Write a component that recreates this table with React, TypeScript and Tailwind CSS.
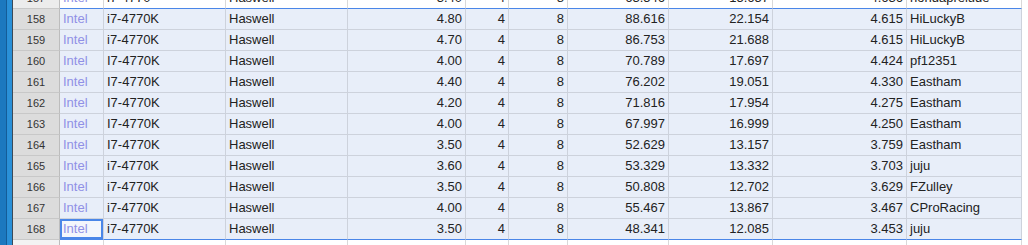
import React from "react";

const widths = [44, 122, 122, 118, 43, 59, 101, 104, 134, 115];
const align = ["l", "l", "l", "r", "r", "r", "r", "r", "r", "l"];

const rows: string[][] = [
  ["158", "Intel", "i7-4770K", "Haswell", "4.80", "4", "8", "88.616", "22.154", "4.615", "HiLuckyB"],
  ["159", "Intel", "i7-4770K", "Haswell", "4.70", "4", "8", "86.753", "21.688", "4.615", "HiLuckyB"],
  ["160", "Intel", "I7-4770K", "Haswell", "4.00", "4", "8", "70.789", "17.697", "4.424", "pf12351"],
  ["161", "Intel", "I7-4770K", "Haswell", "4.40", "4", "8", "76.202", "19.051", "4.330", "Eastham"],
  ["162", "Intel", "I7-4770K", "Haswell", "4.20", "4", "8", "71.816", "17.954", "4.275", "Eastham"],
  ["163", "Intel", "I7-4770K", "Haswell", "4.00", "4", "8", "67.997", "16.999", "4.250", "Eastham"],
  ["164", "Intel", "I7-4770K", "Haswell", "3.50", "4", "8", "52.629", "13.157", "3.759", "Eastham"],
  ["165", "Intel", "i7-4770K", "Haswell", "3.60", "4", "8", "53.329", "13.332", "3.703", "juju"],
  ["166", "Intel", "i7-4770K", "Haswell", "3.50", "4", "8", "50.808", "12.702", "3.629", "FZulley"],
  ["167", "Intel", "i7-4770K", "Haswell", "4.00", "4", "8", "55.467", "13.867", "3.467", "CProRacing"],
  ["168", "Intel", "i7-4770K", "Haswell", "3.50", "4", "8", "48.341", "12.085", "3.453", "juju"],
];

const top = ["157", "Intel", "i7-4770", "Haswell", "3.40", "4", "8", "63.546", "15.657", "4.636", "hondaprelude"];

function Row({
  cells,
  selected,
  last,
  topRow,
}: {
  cells: string[];
  selected: boolean;
  last?: boolean;
  topRow?: boolean;
}) {
  return (
    <div className="flex h-[21px]">
      <div
        className={
          "w-[47px] shrink-0 border-r border-b border-r-[#bdbdbd] border-b-[#c8c8c8] text-center text-[11px] leading-[20px] text-[#333] " +
          (selected ? "bg-[#dcdcdc]" : "bg-[#ececec]")
        }
      >
        {cells[0]}
      </div>
      {widths.map((w, i) => {
        const active = last && i === 0;
        return (
          <div
            key={i}
            style={{ width: w }}
            className={
              "shrink-0 overflow-hidden whitespace-nowrap border-r border-b px-[3px] text-[13px] leading-[20px] " +
              (align[i] === "r" ? "text-right " : "text-left ") +
              (selected ? "bg-[#e8eef9] border-r-[#cdd2dc] " : "bg-white border-r-[#d9d9d9] ") +
              (topRow || last ? "border-b-[#4a86e8] " : "border-b-[#cdd2dc] ") +
              (i === 0 ? "text-[#9090e6] " : "text-[#222] ") +
              (active ? "bg-[#f3f6fc] shadow-[inset_0_0_0_2px_#4a86e8] " : "")
            }
          >
            {cells[i + 1]}
          </div>
        );
      })}
      <div className="flex-1 bg-white" />
    </div>
  );
}

export default function App() {
  return (
    <div
      className="flex h-[245px] w-[1028px] overflow-hidden bg-white"
      style={{ fontFamily: '"Liberation Sans", Arial, sans-serif' }}
    >
      <div className="flex w-[13px] shrink-0">
        <div className="w-[6px] bg-[#1c78bf]" />
        <div className="w-[1px] bg-[#145c98]" />
        <div className="w-[5px] bg-[#2a90d8]" />
        <div className="w-[1px] bg-[#3b4a58]" />
      </div>
      <div className="flex flex-1 flex-col">
        <div className="h-[9px] shrink-0 overflow-hidden">
          <div className="-mt-[12px]">
            <Row cells={top} selected={false} topRow />
          </div>
        </div>
        {rows.map((r, i) => (
          <Row key={r[0]} cells={r} selected last={i === rows.length - 1} />
        ))}
        <div className="flex h-[21px]">
          <div className="w-[47px] shrink-0 border-r border-r-[#bdbdbd] bg-[#f3f3f3]" />
          {widths.map((w, i) => (
            <div key={i} style={{ width: w }} className="shrink-0 border-r border-r-[#d9d9d9] bg-white" />
          ))}
          <div className="flex-1 bg-white" />
        </div>
      </div>
    </div>
  );
}
